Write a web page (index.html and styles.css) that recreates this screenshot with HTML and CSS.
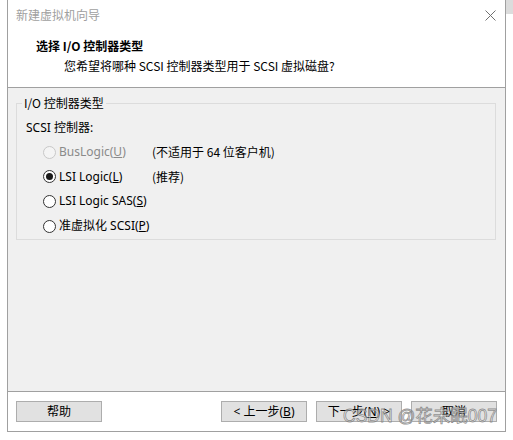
FILE: index.html
```html
<!DOCTYPE html>
<html lang="zh-CN">
<head>
<meta charset="utf-8">
<title>新建虚拟机向导</title>
<link rel="stylesheet" href="styles.css">
</head>
<body>
<div class="window">
  <div class="titlebar">
    <span class="title">新建虚拟机向导</span>
    <svg class="close" width="11" height="11" viewBox="0 0 11 11"><path d="M0.5 0.5 L10.5 10.5 M10.5 0.5 L0.5 10.5" stroke="#707070" stroke-width="1" fill="none"/></svg>
  </div>
  <div class="header">
    <div class="heading">选择 I/O 控制器类型</div>
    <div class="subtitle">您希望将哪种 SCSI 控制器类型用于 SCSI 虚拟磁盘?</div>
  </div>
  <div class="content">
    <fieldset class="group">
      <legend class="legend">I/O 控制器类型</legend>
      <div class="caption">SCSI 控制器:</div>
      <div class="row disabled">
        <span class="radio"></span>
        <span class="label">BusLogic(<u>U</u>)</span>
        <span class="note">(不适用于 64 位客户机)</span>
      </div>
      <div class="row">
        <span class="radio checked"></span>
        <span class="label">LSI Logic(<u>L</u>)</span>
        <span class="note">(推荐)</span>
      </div>
      <div class="row">
        <span class="radio"></span>
        <span class="label">LSI Logic SAS(<u>S</u>)</span>
      </div>
      <div class="row">
        <span class="radio"></span>
        <span class="label">准虚拟化 SCSI(<u>P</u>)</span>
      </div>
    </fieldset>
  </div>
  <div class="buttonbar">
    <button class="btn">帮助</button>
    <div class="spacer"></div>
    <button class="btn">&lt; 上一步(<u>B</u>)</button>
    <button class="btn">下一步(<u>N</u>) &gt;</button>
    <button class="btn">取消</button>
    <div class="watermark">CSDN @花未眠007</div>
  </div>
</div>
</body>
</html>
```
FILE: styles.css
```css
html, body {
  margin: 0;
  padding: 0;
}
body {
  width: 513px;
  height: 440px;
  background: linear-gradient(#dcdcdc, #dcdcdc) right top / 7px 14px no-repeat, #ffffff;
  font-family: "Noto Sans", "Noto Sans CJK SC", sans-serif;
  font-size: 12px;
  color: #000;
  overflow: hidden;
}
.window {
  margin-left: 7px;
  width: 497px;
  border-left: 1px solid #a0a0a0;
  border-right: 1px solid #a0a0a0;
  border-bottom: 1px solid #a0a0a0;
  display: flex;
  flex-direction: column;
}
.titlebar {
  height: 30px;
  background: #fff;
  display: flex;
  align-items: center;
  justify-content: space-between;
  padding: 0 9px 0 8px;
}
.title {
  color: #a0a0a0;
  font-family: "Noto Sans CJK SC", sans-serif;
  line-height: 16px;
}
.close {
  display: block;
}
.header {
  height: 57px;
  background: #fff;
  border-bottom: 1px solid #a0a0a0;
  box-sizing: content-box;
}
.heading {
  padding: 8px 0 0 28px;
  font-weight: bold;
  line-height: 16px;
  font-family: "Noto Sans CJK SC", sans-serif;
}
.subtitle {
  padding: 4px 0 0 56px;
  line-height: 16px;
  font-family: "Noto Sans CJK SC", sans-serif;
}
.content {
  height: 304px;
  background: #f0f0f0;
  border-bottom: 1px solid #a0a0a0;
  padding: 7px 9px 0 8px;
  box-sizing: border-box;
}
.group {
  margin: 0;
  border: 1px solid #dcdcdc;
  padding: 9px 0 0 9px;
  height: 145px;
  box-sizing: border-box;
}
.legend {
  margin-left: -4px;
  padding: 0 2px 0 2px;
  line-height: 16px;
  font-family: "Noto Sans CJK SC", sans-serif;
}
.caption {
  line-height: 16px;
  margin-bottom: 4px;
}
.row {
  height: 24.6px;
  display: flex;
  align-items: center;
  padding-left: 17px;
  line-height: 16px;
}
.radio {
  width: 13px;
  height: 13px;
  box-sizing: border-box;
  border: 1px solid #333;
  border-radius: 50%;
  background: #fff;
  display: flex;
  align-items: center;
  justify-content: center;
  flex: none;
}
.radio.checked::after {
  content: "";
  width: 7px;
  height: 7px;
  border-radius: 50%;
  background: #1a1a1a;
}
.label {
  margin-left: 3px;
  width: 93px;
  flex: none;
}
.note {
  font-family: "Noto Sans CJK SC", sans-serif;
}
.disabled .radio {
  border-color: #c8c8c8;
  background: #f4f4f4;
}
.disabled .label {
  color: #8a8a8a;
}
.buttonbar {
  height: 39px;
  box-sizing: border-box;
  padding: 9px 8px 0 8px;
  display: flex;
  align-items: flex-start;
  gap: 9px;
  position: relative;
}
.spacer {
  flex: 1;
}
.btn {
  width: 86px;
  height: 21px;
  margin: 0;
  padding: 0;
  background: #e1e1e1;
  border: 1px solid #adadad;
  font-family: "Noto Sans", "Noto Sans CJK SC", sans-serif;
  font-size: 12px;
  line-height: 16px;
  color: #000;
}
.watermark {
  position: absolute;
  left: 335px;
  top: 12px;
  font-family: "Liberation Sans", "Noto Sans CJK SC", sans-serif;
  font-size: 17.5px;
  line-height: 24px;
  color: rgba(255, 255, 255, 0.55);
  -webkit-text-stroke: 0.8px rgba(110, 110, 110, 0.75);
  white-space: nowrap;
  pointer-events: none;
}
```
